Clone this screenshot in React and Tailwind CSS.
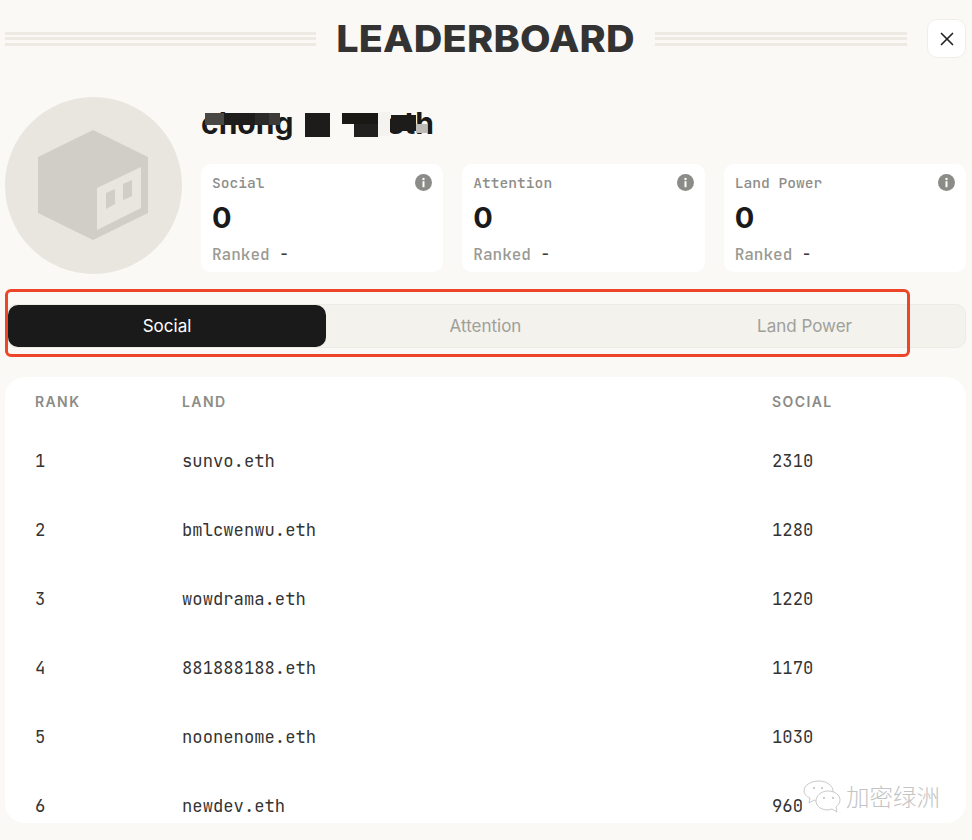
import React from 'react';
import { X } from 'lucide-react';

const rows = [
  ['1', 'sunvo.eth', '2310'],
  ['2', 'bmlcwenwu.eth', '1280'],
  ['3', 'wowdrama.eth', '1220'],
  ['4', '881888188.eth', '1170'],
  ['5', 'noonenome.eth', '1030'],
  ['6', 'newdev.eth', '960'],
];

const stats = ['Social', 'Attention', 'Land Power'];

// mosaic cells over the user name
const mosaic = [
  { id: 1, cls: 'left-[4px] top-[4px] h-[12px] w-[19px] bg-[#4a4845]' },
  { id: 2, cls: 'left-[23px] top-[4px] h-[12px] w-[31px] bg-[#1f1d1b]' },
  { id: 3, cls: 'left-[54px] top-[4px] h-[12px] w-[14px] bg-[#2c2a28]' },
  { id: 4, cls: 'left-[68px] top-[4px] h-[12px] w-[11px] bg-[#3d3b37]' },
  { id: 5, cls: 'left-[104px] top-[4px] h-[24px] w-[25px] bg-[#1e1c1a]' },
  { id: 6, cls: 'left-[141px] top-[4px] h-[11px] w-[36px] bg-[#1a1815]' },
  { id: 7, cls: 'left-[153px] top-[15px] h-[13px] w-[24px] bg-[#22201e]' },
  { id: 8, cls: 'left-[177px] top-[3px] h-[24px] w-[12px] bg-[#f4f3ef]' },
  { id: 9, cls: 'left-[190px] top-[6px] h-[16px] w-[25px] bg-[#1e1c1a]' },
  { id: 10, cls: 'left-[215px] top-[15px] h-[9px] w-[11px] bg-[#bdbbb5]' },
];

function Lines() {
  return (
    <div className="flex flex-1 flex-col gap-[2.5px]">
      <div className="h-[3px] bg-[#eceae2]" />
      <div className="h-[3px] bg-[#eceae2]" />
      <div className="h-[3px] bg-[#eceae2]" />
    </div>
  );
}

function InfoIcon() {
  return (
    <svg width="17" height="17" viewBox="0 0 17 17">
      <circle cx="8.5" cy="8.5" r="8.5" fill="#8b8b87" />
      <circle cx="8.5" cy="5" r="1.2" fill="#fff" />
      <rect x="7.5" y="7.2" width="2" height="6" fill="#fff" />
    </svg>
  );
}

function Avatar() {
  return (
    <svg width="177" height="177" viewBox="5 97 177 177" className="shrink-0">
      <circle cx="93.5" cy="185.5" r="88.5" fill="#e8e6df" />
      <polygon points="93,130 148,157 148,213 93,240 38,213 38,157" fill="#d0cec7" />
      <polygon points="97,188 141,167 141,208 97,230" fill="#e8e6df" />
      <polygon points="106,193 115,189 115,204 106,209" fill="#d0cec7" />
      <polygon points="123,184 132,180 132,196 123,200" fill="#d0cec7" />
    </svg>
  );
}

function StatCard({ label }) {
  return (
    <div className="h-[108px] rounded-[10px] bg-white px-[11px] pt-[9px] font-['JetBrains_Mono','DejaVu_Sans_Mono',monospace]">
      <div className="flex h-[19px] items-center justify-between text-[14.6px] font-medium text-[#8d8d89]">
        <span>{label}</span>
        <InfoIcon />
      </div>
      <div className="mt-[10px] h-[32px] font-['Inter',sans-serif] text-[29px] font-bold leading-[32px] text-[#1a1a1a]">
        0
      </div>
      <div className="mt-[11px] text-[16px] font-medium leading-[20px] text-[#9a9a92]">
        Ranked <span className="text-[#3a3a3a]">-</span>
      </div>
    </div>
  );
}

function Watermark() {
  return (
    <div className="absolute left-[802px] top-[780px] flex items-center gap-[4px]">
      <svg width="40" height="34" viewBox="0 0 40 34" fill="#ffffff" stroke="#c9c9c9" strokeWidth="1">
        <path d="M17 1c8 0 14 5 14 10 0 5-6 10-14 10-2 0-3 0-5-1l-5 3 1-5C4 16 2 14 2 11 2 5 9 1 17 1z" />
        <path d="M26 11c7 0 12 4 12 9 0 3-2 5-4 7l1 5-5-3c-1 0-3 1-4 1-7 0-12-4-12-9s5-10 12-10z" />
        <circle cx="12" cy="8" r="1" fill="#bbb" stroke="none" />
        <circle cx="20" cy="8" r="1" fill="#bbb" stroke="none" />
        <circle cx="22" cy="18" r="1" fill="#bbb" stroke="none" />
        <circle cx="31" cy="18" r="1" fill="#bbb" stroke="none" />
      </svg>
      <span className="font-['Noto_Sans_CJK_SC',sans-serif] text-[23.5px] font-light leading-none text-[#c4c4c4]">
        加密绿洲
      </span>
    </div>
  );
}

export default function App() {
  return (
    <div className="relative h-[840px] w-[972px] overflow-hidden bg-[#faf9f5] pl-[5px] pr-[6px] pt-[19px]">
      {/* header */}
      <div className="flex h-[39px] items-center">
        <Lines />
        <h1 className="mx-[20px] w-[299px] scale-x-[1.07] whitespace-nowrap text-center font-['Inter',sans-serif] text-[37px] font-extrabold leading-none tracking-[0.2px] text-[#333333]">
          LEADERBOARD
        </h1>
        <div className="w-[252px] shrink-0">
          <Lines />
        </div>
        <button className="ml-[20px] flex h-[39px] w-[39px] shrink-0 items-center justify-center rounded-[10px] border border-[#efeee8] bg-white text-[#222222]">
          <X size={22} strokeWidth={1.8} />
        </button>
      </div>

      {/* profile */}
      <div className="mt-[39px] flex gap-[19px]">
        <Avatar />
        <div className="flex-1">
          <div className="relative h-[67px] pt-[12px]">
            <div className="relative flex h-[29px] w-[233px] justify-between font-['Inter',sans-serif] text-[30px] font-bold leading-[29px] text-[#1a1a1a]">
              <span>chong</span>
              <span>eth</span>
              {mosaic.map((m) => (
                <div key={m.id} className={`absolute ${m.cls}`} />
              ))}
            </div>
          </div>
          <div className="grid grid-cols-3 gap-[19px]">
            {stats.map((s) => (
              <StatCard key={s} label={s} />
            ))}
          </div>
        </div>
      </div>

      {/* tabs */}
      <div className="mt-[30px] ml-[1px] grid h-[44px] grid-cols-[318px_319px_319px] rounded-[10px] border border-[#ecebe4] bg-[#f3f2ed] px-[1px] font-['Inter',sans-serif] text-[17px]">
        <div className="flex items-center justify-center rounded-[10px] bg-[#1a1a1a] pt-[1px] text-white">Social</div>
        <div className="flex items-center justify-center pt-[1px] text-[#a0a09a]">Attention</div>
        <div className="flex items-center justify-center pt-[1px] text-[#a0a09a]">Land Power</div>
      </div>

      {/* table */}
      <div className="mt-[29px] h-[446px] overflow-hidden rounded-[20px] bg-white px-[30px]">
        <div className="grid h-[49.5px] grid-cols-[147px_590px_1fr] items-center font-['Inter',sans-serif] text-[14px] font-semibold tracking-[1.4px] text-[#8b8b87]">
          <span>RANK</span>
          <span>LAND</span>
          <span>SOCIAL</span>
        </div>
        {rows.map((r) => (
          <div
            key={r[0]}
            className="grid h-[68.9px] grid-cols-[147px_590px_1fr] items-center font-['JetBrains_Mono','DejaVu_Sans_Mono',monospace] text-[17.2px] text-[#333333]"
          >
            <span>{r[0]}</span>
            <span>{r[1]}</span>
            <span>{r[2]}</span>
          </div>
        ))}
      </div>

      {/* annotation on the screenshot */}
      <div className="absolute left-[5px] top-[289px] h-[68px] w-[905px] rounded-[6px] border-[3px] border-[#ee4528]" />
      <Watermark />
    </div>
  );
}
